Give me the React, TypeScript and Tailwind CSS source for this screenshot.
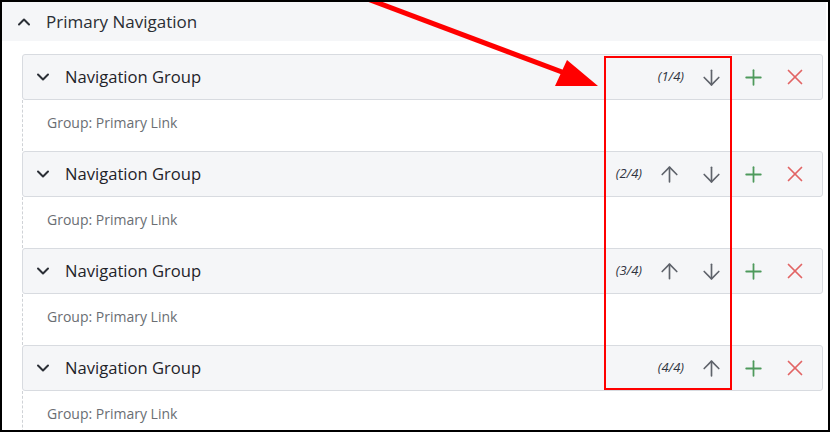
import { ArrowDown, ArrowUp, ChevronDown, ChevronUp, Plus, X } from "lucide-react";

const groups = [1, 2, 3, 4];

const NavGroup = ({ index, total }: { index: number; total: number }) => {
  return (
    <div>
      <div className="flex h-[46px] items-center rounded-[3px] border border-[#d8dbe0] bg-[#f5f6f8] pl-[10px] pr-[6px]">
        <ChevronDown className="h-5 w-5 text-[#2b2f36]" strokeWidth={2.4} />
        <span className="ml-[12px] text-[16.6px] text-[#1f2329]">Navigation Group</span>
        <div className="ml-auto flex items-center">
          <span className="mr-[6px] text-[13px] italic text-[#2f3440]">
            ({index}/{total})
          </span>
          {index > 1 && (
            <button className="flex w-[42px] justify-center text-[#5f636b]">
              <ArrowUp className="h-[25px] w-[25px]" strokeWidth={1.6} />
            </button>
          )}
          {index < total && (
            <button className="flex w-[42px] justify-center text-[#5f636b]">
              <ArrowDown className="h-[25px] w-[25px]" strokeWidth={1.6} />
            </button>
          )}
          <button className="flex w-[42px] justify-center text-[#4e9a5c]">
            <Plus className="h-[25px] w-[25px]" strokeWidth={1.7} />
          </button>
          <button className="flex w-[42px] justify-center text-[#e26464]">
            <X className="h-[26px] w-[26px]" strokeWidth={1.6} />
          </button>
        </div>
      </div>
      <div className="h-[51px] border-l border-dashed border-[#cfd2d6] pl-[24px] pt-[12px] text-[14px] text-[#6a6e73]">
        Group: Primary Link
      </div>
    </div>
  );
};

export default function App() {
  return (
    <div
      className="relative h-[432px] w-[830px] overflow-hidden border-2 border-black bg-white"
      style={{ fontFamily: '"Open Sans", "Noto Sans", sans-serif' }}
    >
      <div className="mr-[2px] flex h-[39px] items-center bg-[#f5f6f8] pl-[12px]">
        <ChevronUp className="h-5 w-5 text-[#2b2f36]" strokeWidth={2.4} />
        <span className="ml-[12px] text-[17px] text-[#2a2e34]">Primary Navigation</span>
      </div>

      <div className="pl-[20px] pr-[5px] pt-[13px]">
        {groups.map((i) => (
          <NavGroup key={i} index={i} total={groups.length} />
        ))}
      </div>

      {/* annotation overlay */}
      <div className="pointer-events-none absolute left-[602px] top-[54px] h-[334px] w-[128px] border-2 border-[#ff0000]" />
      <svg className="pointer-events-none absolute left-[-2px] top-[-2px]" width="830" height="432">
        <line x1="365" y1="-2" x2="578" y2="78" stroke="#ff0000" strokeWidth="5" />
        <polygon points="598,86 567,60 555,86" fill="#ff0000" />
      </svg>
    </div>
  );
}
